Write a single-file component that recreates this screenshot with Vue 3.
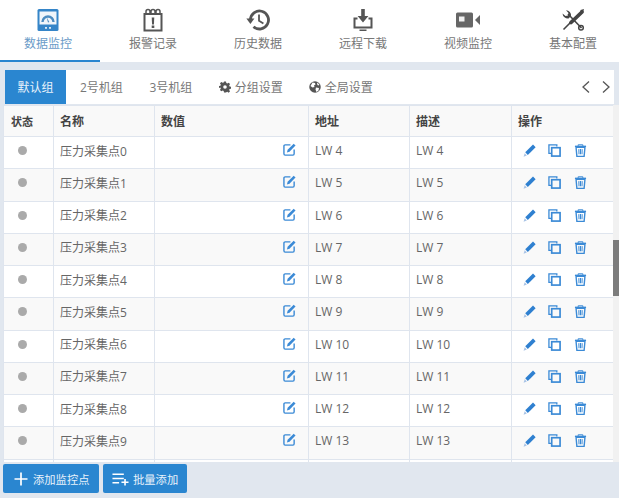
<script setup>
const navItems = [
  { label: '数据监控', icon: 'gauge', active: true },
  { label: '报警记录', icon: 'alarm' },
  { label: '历史数据', icon: 'history' },
  { label: '远程下载', icon: 'download' },
  { label: '视频监控', icon: 'video' },
  { label: '基本配置', icon: 'tools' }
]
const rows = Array.from({ length: 11 }, (_, i) => ({
  name: i < 10 ? '压力采集点' + i : '',
  addr: i < 10 ? 'LW ' + (i + 4) : '',
  filled: i < 10
}))
</script>

<template>
  <div class="page">
    <nav class="nav">
      <div v-for="item in navItems" :key="item.label" class="nav-item" :class="{ active: item.active }">
        <svg class="nav-icon" viewBox="0 0 24 24">
          <template v-if="item.icon === 'gauge'">
            <rect x="1.500" y="1" width="21" height="22" rx="1.500" fill="#3585c8" />
            <rect x="3.500" y="3.500" width="17" height="13" fill="#f0f5fa" />
            <path d="M6.500 14a5.500 5.500 0 0 1 11 0" fill="none" stroke="#4d8cc0" stroke-width="2.400" />
            <path d="M12 14.500l-1.500-5.500 2.800 5z" fill="#4d8cc0" />
            <rect x="9" y="19" width="2" height="1.800" fill="#dbe9f5" />
            <rect x="13" y="19" width="2" height="1.800" fill="#dbe9f5" />
          </template>
          <template v-else-if="item.icon === 'alarm'">
            <path d="M3.500 6H20.500V22.500H3.500z" fill="#fff" stroke="#555" stroke-width="2" />
            <path d="M5 6.500V3.500a2 2 0 0 1 4 0v3M10 6.500V3.500a2 2 0 0 1 4 0v3M15 6.500V3.500a2 2 0 0 1 4 0v3" fill="none" stroke="#555" stroke-width="1.500" />
            <path d="M10.700 9.500h2.600l-.4 7h-1.800z" fill="#555" />
            <rect x="10.700" y="17.500" width="2.600" height="2.500" fill="#555" />
          </template>
          <template v-else-if="item.icon === 'history'">
            <path d="M4.500 12a9 9 0 1 1 3 6.700" fill="none" stroke="#555" stroke-width="2.800" />
            <path d="M0.400 10.500h8l-4 5.500z" fill="#555" />
            <path d="M13 6.500v6.200l4.400 2.800" fill="none" stroke="#555" stroke-width="1.800" />
          </template>
          <template v-else-if="item.icon === 'download'">
            <path d="M10.200 1h3.600v7h3.600L12 14.500 6.600 8h3.600z" fill="#555" />
            <path d="M6.500 10.500H3.500v9h17v-9h-3" fill="none" stroke="#555" stroke-width="2" />
            <path d="M8.500 21.500h7V23h-7z" fill="#555" />
          </template>
          <template v-else-if="item.icon === 'video'">
            <rect x="0" y="4.500" width="17" height="15" rx="1.500" fill="#666" />
            <rect x="3" y="8.500" width="5.500" height="5" fill="#f0f0f0" />
            <path d="M19 12l5-5v10z" fill="#666" />
          </template>
          <template v-else>
            <path d="M7 6L20.500 20" stroke="#444" stroke-width="1.600" />
            <path d="M1.500 5.500L4.500 8l2.500-.5.500-2.500L5 2.200A5 5 0 0 1 10 8l-2.500 2.500A5.500 5.500 0 0 1 1.500 5.500z" fill="#444" />
            <circle cx="20" cy="19.700" r="2.300" fill="none" stroke="#444" stroke-width="1.500" />
            <path d="M2.500 21.500L11 13" stroke="#444" stroke-width="1.600" />
            <path d="M10 14.500L21 4" stroke="#444" stroke-width="3.800" stroke-linecap="round" />
            <path d="M19.500 2l3.500-1-1 3.500-2.500 1z" fill="#444" />
          </template>
        </svg>
        <span>{{ item.label }}</span>
      </div>
    </nav>

    <div class="tabs">
      <div class="tab current">默认组</div>
      <div class="tab group">2号机组</div>
      <div class="tab group">3号机组</div>
      <div class="tab setting">
        <svg class="tab-icon" viewBox="0 0 24 24">
          <path d="M10 1h4l.6 3.200 2 .9 2.700-1.800 2.800 2.800-1.800 2.700.9 2 3.200.6v4l-3.200.6-.9 2 1.800 2.700-2.800 2.800-2.700-1.800-2 .9L14 23h-4l-.6-3.200-2-.9-2.700 1.800-2.800-2.800 1.800-2.700-.9-2L-.4 14v-4l3.200-.6.9-2L1.900 4.700l2.800-2.800 2.700 1.800 2-.9z" fill="#555" />
          <circle cx="12" cy="12" r="3.600" fill="#fff" />
        </svg>
        分组设置
      </div>
      <div class="tab setting">
        <svg class="tab-icon" viewBox="0 0 24 24">
          <circle cx="12" cy="12" r="11.500" fill="#555" />
          <path d="M7 3l5 1 1 3-3 2 1 3-4 1-4-3zM14 13l6 1-1 5-4 3-2-5zM17 3l4 5-3 1-2-3z" fill="#fff" />
        </svg>
        全局设置
      </div>
      <div class="arrows">
        <svg viewBox="0 0 10 14"><path d="M8 1.500L2 7l6 5.500" /></svg>
        <svg viewBox="0 0 10 14"><path d="M2 1.500L8 7l-6 5.500" /></svg>
      </div>
    </div>

    <div class="table-wrap">
      <div class="table">
        <div class="row head">
          <div class="cell c-state">状态</div>
          <div class="cell c-name">名称</div>
          <div class="cell c-value">数值</div>
          <div class="cell c-addr">地址</div>
          <div class="cell c-desc">描述</div>
          <div class="cell c-ops">操作</div>
        </div>
        <div v-for="(r, i) in rows" :key="i" class="row" :class="{ odd: i % 2 === 1 }">
          <div class="cell c-state"><i v-if="r.filled" class="dot"></i></div>
          <div class="cell c-name">{{ r.name }}</div>
          <div class="cell c-value">
            <svg v-if="r.filled" class="edit" viewBox="0 0 14 14">
              <path d="M8 2H2.300A1.300 1.300 0 0 0 1 3.300v8.400A1.300 1.300 0 0 0 2.300 13h8.400a1.300 1.300 0 0 0 1.300-1.300V7" fill="none" stroke="#3b8ad6" stroke-width="1.500" />
              <path d="M11.500 .8l2 2-6.500 6.500-2.800.8.800-2.800z" fill="#3b8ad6" />
            </svg>
          </div>
          <div class="cell c-addr">{{ r.addr }}</div>
          <div class="cell c-desc">{{ r.addr }}</div>
          <div class="cell c-ops">
            <template v-if="r.filled">
              <svg class="op" viewBox="0 0 14 14">
                <path d="M10.800 .6l2.800 2.800-8.400 8.400-2.800-2.800z" fill="#2f80d0" />
                <path d="M1.800 10l2.400 2.400-3.600 1.200z" fill="#a9c4e6" />
              </svg>
              <svg class="op" viewBox="0 0 14 14">
                <path d="M9.500 2.700V1H1v9h2.500" fill="none" stroke="#3b8ad6" stroke-width="1.400" />
                <rect x="4" y="4" width="9" height="9" fill="none" stroke="#3b8ad6" stroke-width="1.800" />
              </svg>
              <svg class="op" viewBox="0 0 14 14">
                <path d="M1 2.500h12" stroke="#3b8ad6" stroke-width="1.500" />
                <path d="M4.500 2.200V.8h5v1.400" fill="none" stroke="#3b8ad6" stroke-width="1" />
                <path d="M2.200 3.500h9.600l-.9 9.800H3.100z" fill="none" stroke="#3b8ad6" stroke-width="1.500" />
                <path d="M5.200 5.500l.2 5.500M7 5.500V11M8.800 5.500L8.600 11" stroke="#3b8ad6" stroke-width="1.100" />
              </svg>
            </template>
          </div>
        </div>
      </div>
      <div class="scrollbar"><div class="thumb"></div></div>
    </div>

    <div class="footer">
      <button class="btn add">
        <svg viewBox="0 0 14 14"><path d="M7 0.500v13M0.500 7h13" stroke="#fff" stroke-width="1.700" /></svg>
        添加监控点
      </button>
      <button class="btn bulk">
        <svg viewBox="0 0 18 14"><path d="M0.500 2h12M0.500 6.500h12M0.500 11h7M10 10.500h7.500M13.800 7v7" stroke="#fff" stroke-width="1.700" fill="none" /></svg>
        批量添加
      </button>
    </div>
  </div>
</template>

<style>
html, body { margin: 0; background: #e1e7ef; }
</style>

<style scoped>
.page {
  width: 619px;
  height: 498px;
  display: flex;
  flex-direction: column;
  overflow: hidden;
  background: #e1e7ef;
  font-family: "Open Sans", "Noto Sans CJK SC", sans-serif;
  font-size: 12px;
  color: #666;
}
.nav {
  height: 62px;
  flex: none;
  display: flex;
  gap: 9px;
  background: #fff;
}
.nav-item {
  position: relative;
  flex: none;
  width: 96px;
  display: flex;
  flex-direction: column;
  align-items: center;
  padding-top: 8px;
  box-sizing: border-box;
  color: #777;
  line-height: 17px;
}
.nav-item.active { color: #6a9bc8; }
.nav-item.active::after {
  content: "";
  position: absolute;
  left: 0;
  bottom: 0;
  width: 100px;
  height: 2px;
  background: #2a86d0;
}
.nav-icon {
  width: 24px;
  height: 24px;
  margin-bottom: 3px;
}
.tabs {
  margin: 8px 5px 0 5px;
  height: 34px;
  flex: none;
  display: flex;
  align-items: center;
  background: #fff;
  color: #777;
}
.tab {
  height: 100%;
  display: flex;
  align-items: center;
}
.tab.current {
  width: 61px;
  justify-content: center;
  background: #2a86d0;
  color: #e8f2fb;
  margin-right: 14px;
}
.tab.group { margin-right: 26.500px; }
.tab.setting { margin-right: 26px; gap: 4px; }
.tab-icon { width: 12px; height: 12px; }
.arrows {
  margin-left: auto;
  display: flex;
  gap: 10px;
  padding-right: 3px;
}
.arrows svg { width: 10px; height: 14px; }
.arrows path { fill: none; stroke: #555; stroke-width: 1.300; }
.table-wrap {
  position: relative;
  flex: none;
  height: 357px;
  margin: 1px 0 0 3px;
  overflow: hidden;
  background: #fff;
}
.table { width: 610px; }
.row {
  display: grid;
  grid-template-columns: 50px 101px 154px 101px 102px 102px;
  height: 32.250px;
  box-sizing: border-box;
  border-bottom: 1.500px solid #dfe5ee;
  background: #fff;
}
.row.odd { background: #f9f9f9; }
.row.head {
  height: 32px;
  background: #f9f9f9;
  color: #444;
  font-weight: 700;
  border-top: 1px solid #dfe5ee;
}
.cell {
  display: flex;
  align-items: center;
  padding: 0 0 4px 6px;
  box-sizing: border-box;
  border-left: 1.500px solid #dfe5ee;
  white-space: nowrap;
  color: #666;
}
.head .cell { color: #444; padding-bottom: 0; }
.c-state { padding-left: 7px; }
.head .c-state { font-size: 11px; }
.dot {
  width: 9px;
  height: 9px;
  margin-left: 7px;
  border-radius: 50%;
  background: #aaa;
}
.c-value { position: relative; }
.edit {
  position: absolute;
  right: 12px;
  top: 6px;
  width: 13px;
  height: 13px;
}
.c-ops { gap: 12.500px; padding-left: 10.500px; }
.head .c-ops { padding-left: 6px; }
.op { width: 13px; height: 13px; }
.scrollbar {
  position: absolute;
  top: 0;
  right: 0;
  bottom: 0;
  width: 6px;
  background: #f1f1f1;
}
.thumb {
  position: absolute;
  top: 135px;
  left: 0;
  width: 6px;
  height: 56px;
  background: #7c7c7c;
}
.footer {
  display: flex;
  gap: 4px;
  padding: 2px 0 0 3px;
}
.btn {
  height: 29px;
  border: none;
  border-radius: 2px;
  background: #2a86d0;
  color: #e8f2fb;
  font: inherit;
  font-size: 11.300px;
  display: flex;
  align-items: center;
  padding: 0;
}
.btn.add { width: 96px; padding-left: 11px; gap: 5px; }
.btn.add svg { width: 14px; height: 14px; }
.btn.bulk { width: 84px; padding-left: 9px; gap: 4px; }
.btn.bulk svg { width: 17px; height: 14px; }
</style>
